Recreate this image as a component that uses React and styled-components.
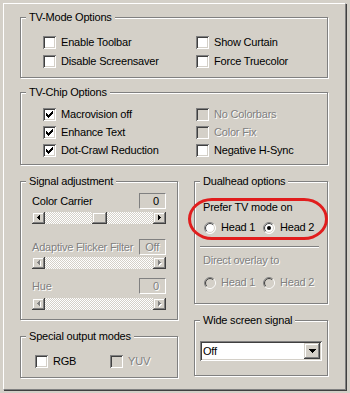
import React from "react";
import styled, { createGlobalStyle } from "styled-components";

const GlobalStyle = createGlobalStyle`
  html, body {
    margin: 0;
    padding: 0;
    background: #d4d0c8;
  }
  body {
    font-family: "Liberation Sans", Arial, sans-serif;
    font-size: 11px;
    letter-spacing: -0.2px;
    color: #000;
  }
`;

const Page = styled.div`
  width: 350px;
  height: 393px;
  box-sizing: border-box;
  padding: 3px 0 0 3px;
  background: #d4d0c8;
`;

const Frame = styled.div`
  box-sizing: border-box;
  width: 343px;
  height: 387px;
  border-left: 1px solid #fff;
  border-top: 1px solid #fff;
  border-right: 1px solid #808080;
  border-bottom: 1px solid #808080;
  box-shadow: 1px 1px 0 #404040;
  padding: 13px 0 0 16px;
  display: flex;
  flex-direction: column;
`;

const Group = styled.div`
  position: relative;
  box-sizing: border-box;
  flex: none;
  width: ${(p) => p.$w}px;
  height: ${(p) => p.$h}px;
  margin-top: ${(p) => p.$mt || 0}px;
  padding: ${(p) => p.$pad || "0"};
  border: 1px solid #808080;
  box-shadow: inset 1px 1px #fff, 1px 1px 0 #fff;
`;

const Caption = styled.span`
  position: absolute;
  top: -7px;
  left: 5px;
  padding: 0 3px;
  line-height: 13px;
  background: #d4d0c8;
  white-space: nowrap;
`;

const CheckGrid = styled.div`
  display: grid;
  grid-template-columns: 153px auto;
  grid-auto-rows: ${(p) => p.$row}px;
  align-items: center;
`;

const Row = styled.div`
  display: flex;
  align-items: center;
  margin-top: ${(p) => p.$mt || 0}px;
  margin-left: ${(p) => p.$ml || 0}px;
`;

const Text = styled.span`
  line-height: 13px;
  white-space: nowrap;
  margin-top: ${(p) => p.$mt || 0}px;
  color: ${(p) => (p.$off ? "#808080" : "#000")};
  text-shadow: ${(p) => (p.$off ? "1px 1px 0 #fff" : "none")};
`;

const sunken = `
  box-shadow: inset 1px 1px #808080, inset -1px -1px #fff,
    inset 2px 2px #404040, inset -2px -2px #d4d0c8;
`;

const raised = `
  box-shadow: inset -1px -1px #404040, inset 1px 1px #d4d0c8,
    inset -2px -2px #808080, inset 2px 2px #fff;
`;

const Box = styled.span`
  flex: none;
  box-sizing: border-box;
  width: 13px;
  height: 13px;
  display: flex;
  align-items: center;
  justify-content: center;
  background: ${(p) => (p.$off ? "#d4d0c8" : "#fff")};
  ${sunken}
`;

const Label = styled.label`
  display: flex;
  align-items: center;
  gap: 5px;
  width: ${(p) => (p.$w ? `${p.$w}px` : "auto")};
`;

const CHECK = [
  "......#",
  ".....##",
  "#...###",
  "##.###.",
  "#####..",
  ".###...",
  "..#....",
];

const pixels = (rows) =>
  rows
    .map((r, y) =>
      r
        .split("")
        .map((c, x) => (c === "#" ? `M${x} ${y}h1v1h-1z` : ""))
        .join("")
    )
    .join("");

const CheckMark = () => (
  <svg width="7" height="7" viewBox="0 0 7 7" shapeRendering="crispEdges">
    <path d={pixels(CHECK)} fill="#000" />
  </svg>
);

const CheckBox = ({ label, checked, off, w }) => (
  <Label $w={w}>
    <Box $off={off}>{checked && <CheckMark />}</Box>
    <Text $off={off}>{label}</Text>
  </Label>
);

const arc = (r, from, to) => {
  const c = 6;
  const k = 0.7071;
  const p = (s) => `${c + s[0] * r * k} ${c + s[1] * r * k}`;
  return `M${p(from)}A${r} ${r} 0 0 1 ${p(to)}`;
};

const RadioDot = ({ on, off }) => (
  <svg width="12" height="12" viewBox="0 0 12 12">
    <circle cx="6" cy="6" r="5.5" fill={off ? "#d4d0c8" : "#fff"} />
    <path d={arc(5.5, [-1, 1], [1, -1])} stroke="#808080" fill="none" />
    <path d={arc(5.5, [1, -1], [-1, 1])} stroke="#fff" fill="none" />
    <path d={arc(4.5, [-1, 1], [1, -1])} stroke="#404040" fill="none" />
    <path d={arc(4.5, [1, -1], [-1, 1])} stroke="#d4d0c8" fill="none" />
    {on && <circle cx="6" cy="6" r="2" fill="#000" />}
  </svg>
);

const Radio = ({ label, on, off, w }) => (
  <Label $w={w}>
    <RadioDot on={on} off={off} />
    <Text $off={off}>{label}</Text>
  </Label>
);

const Column = styled.div`
  display: flex;
  flex-direction: column;
  gap: 16px;
`;

const Lower = styled.div`
  display: flex;
  gap: 16px;
  margin-top: 16px;
`;

const Value = styled.span`
  box-sizing: border-box;
  width: 27px;
  height: 16px;
  padding-right: 6px;
  text-align: right;
  line-height: 14px;
  border: 1px solid;
  border-color: #808080 #fff #fff #808080;
  color: ${(p) => (p.$off ? "#808080" : "#000")};
  text-shadow: ${(p) => (p.$off ? "1px 1px 0 #fff" : "none")};
`;

const SliderHead = styled.div`
  display: flex;
  align-items: center;
  justify-content: space-between;
  height: 16px;
  margin-top: ${(p) => p.$mt}px;
`;

const Scroll = styled.div`
  display: flex;
  height: 12px;
  margin-top: ${(p) => p.$mt}px;
`;

const ArrowBtn = styled.span`
  flex: none;
  box-sizing: border-box;
  width: 13px;
  height: 12px;
  display: flex;
  align-items: center;
  justify-content: center;
  background: #d4d0c8;
  ${raised}
`;

const Track = styled.span`
  flex: 1;
  display: flex;
  background: repeating-conic-gradient(#fff 0 25%, #d4d0c8 0 50%) 0 0 / 2px 2px;
`;

const Thumb = styled.span`
  box-sizing: border-box;
  width: 15px;
  height: 12px;
  background: #d4d0c8;
  ${raised}
`;

const Arrow = ({ dir, off }) => (
  <svg width="4" height="6" viewBox="0 0 4 6" shapeRendering="crispEdges">
    {off && (
      <path
        d={dir === "l" ? "M3 1h1v5h-1zM2 2h1v3h-1zM1 3h1v1h-1z" : "M1 1h1v5h-1zM2 2h1v3h-1zM3 3h1v1h-1z"}
        fill="#fff"
      />
    )}
    <path
      d={dir === "l" ? "M2 0h1v5h-1zM1 1h1v3h-1zM0 2h1v1h-1z" : "M0 0h1v5h-1zM1 1h1v3h-1zM2 2h1v1h-1z"}
      fill={off ? "#808080" : "#000"}
    />
  </svg>
);

const ScrollBar = ({ pos, off, mt }) => (
  <Scroll $mt={mt}>
    <ArrowBtn>
      <Arrow dir="l" off={off} />
    </ArrowBtn>
    <Track>{pos != null && <Thumb style={{ marginLeft: pos }} />}</Track>
    <ArrowBtn>
      <Arrow dir="r" off={off} />
    </ArrowBtn>
  </Scroll>
);

const Slider = ({ label, value, off, pos, headMt, barMt }) => (
  <>
    <SliderHead $mt={headMt}>
      <Text $off={off}>{label}</Text>
      <Value $off={off}>{value}</Value>
    </SliderHead>
    <ScrollBar pos={pos} off={off} mt={barMt} />
  </>
);

const Stack = styled.div`
  display: flex;
  flex-direction: column;
`;

const Separator = styled.div`
  width: 119px;
  height: 0;
  margin: ${(p) => p.$m};
  border-top: 1px solid #808080;
  border-bottom: 1px solid #fff;
`;

const Highlight = styled.div`
  position: absolute;
  left: -7px;
  top: 16px;
  width: 140px;
  height: 42px;
  box-sizing: border-box;
  border: 3px solid #e11d1d;
  border-radius: 24px / 21px;
  pointer-events: none;
`;

const Select = styled.div`
  box-sizing: border-box;
  width: 122px;
  height: 20px;
  display: flex;
  align-items: center;
  justify-content: space-between;
  padding: 2px 2px 2px 3px;
  background: #fff;
  ${sunken}
`;

const DropBtn = styled.span`
  box-sizing: border-box;
  width: 16px;
  height: 16px;
  display: flex;
  align-items: center;
  justify-content: center;
  background: #d4d0c8;
  ${raised}
`;

export default function App() {
  return (
    <>
      <GlobalStyle />
      <Page>
        <Frame>
          <Group $w={308} $h={61} $pad="15px 0 0 22px">
            <Caption>TV-Mode Options</Caption>
            <CheckGrid $row={19}>
              <CheckBox label="Enable Toolbar" />
              <CheckBox label="Show Curtain" />
              <CheckBox label="Disable Screensaver" />
              <CheckBox label="Force Truecolor" />
            </CheckGrid>
          </Group>

          <Group $w={308} $h={73} $mt={14} $pad="12px 0 0 22px">
            <Caption>TV-Chip Options</Caption>
            <CheckGrid $row={18}>
              <CheckBox label="Macrovision off" checked />
              <CheckBox label="No Colorbars" off />
              <CheckBox label="Enhance Text" checked />
              <CheckBox label="Color Fix" off />
              <CheckBox label="Dot-Crawl Reduction" checked />
              <CheckBox label="Negative H-Sync" />
            </CheckGrid>
          </Group>

          <Lower>
            <Column>
              <Group $w={158} $h={139} $pad="0 11px">
                <Caption>Signal adjustment</Caption>
                <Stack>
                  <Slider label="Color Carrier" value="0" pos={47} headMt={11} barMt={3} />
                  <Slider label="Adaptive Flicker Filter" value="Off" off headMt={15} barMt={2} />
                  <Slider label="Hue" value="0" off headMt={9} barMt={4} />
                </Stack>
              </Group>
              <Group $w={158} $h={42} $pad="18px 0 0 14px">
                <Caption>Special output modes</Caption>
                <Row>
                  <CheckBox label="RGB" w={75} />
                  <CheckBox label="YUV" off />
                </Row>
              </Group>
            </Column>

            <Column>
              <Group $w={134} $h={123} $pad="19px 0 0 8px">
                <Caption>Dualhead options</Caption>
                <Highlight />
                <Stack>
                  <Text>Prefer TV mode on</Text>
                  <Row $mt={7} $ml={1}>
                    <Radio label="Head 1" w={59} />
                    <Radio label="Head 2" on />
                  </Row>
                  <Separator $m="12px 0 0 -3px" />
                  <Text $off $mt={6}>
                    Direct overlay to
                  </Text>
                  <Row $mt={9} $ml={1}>
                    <Radio label="Head 1" off w={59} />
                    <Radio label="Head 2" off />
                  </Row>
                </Stack>
              </Group>
              <Group $w={134} $h={56} $pad="20px 0 0 5px">
                <Caption>Wide screen signal</Caption>
                <Select>
                  <Text>Off</Text>
                  <DropBtn>
                    <svg width="7" height="4" viewBox="0 0 7 4" shapeRendering="crispEdges">
                      <path d="M0 0h7v1h-7zM1 1h5v1h-5zM2 2h3v1h-3zM3 3h1v1h-1z" fill="#000" />
                    </svg>
                  </DropBtn>
                </Select>
              </Group>
            </Column>
          </Lower>
        </Frame>
      </Page>
    </>
  );
}
